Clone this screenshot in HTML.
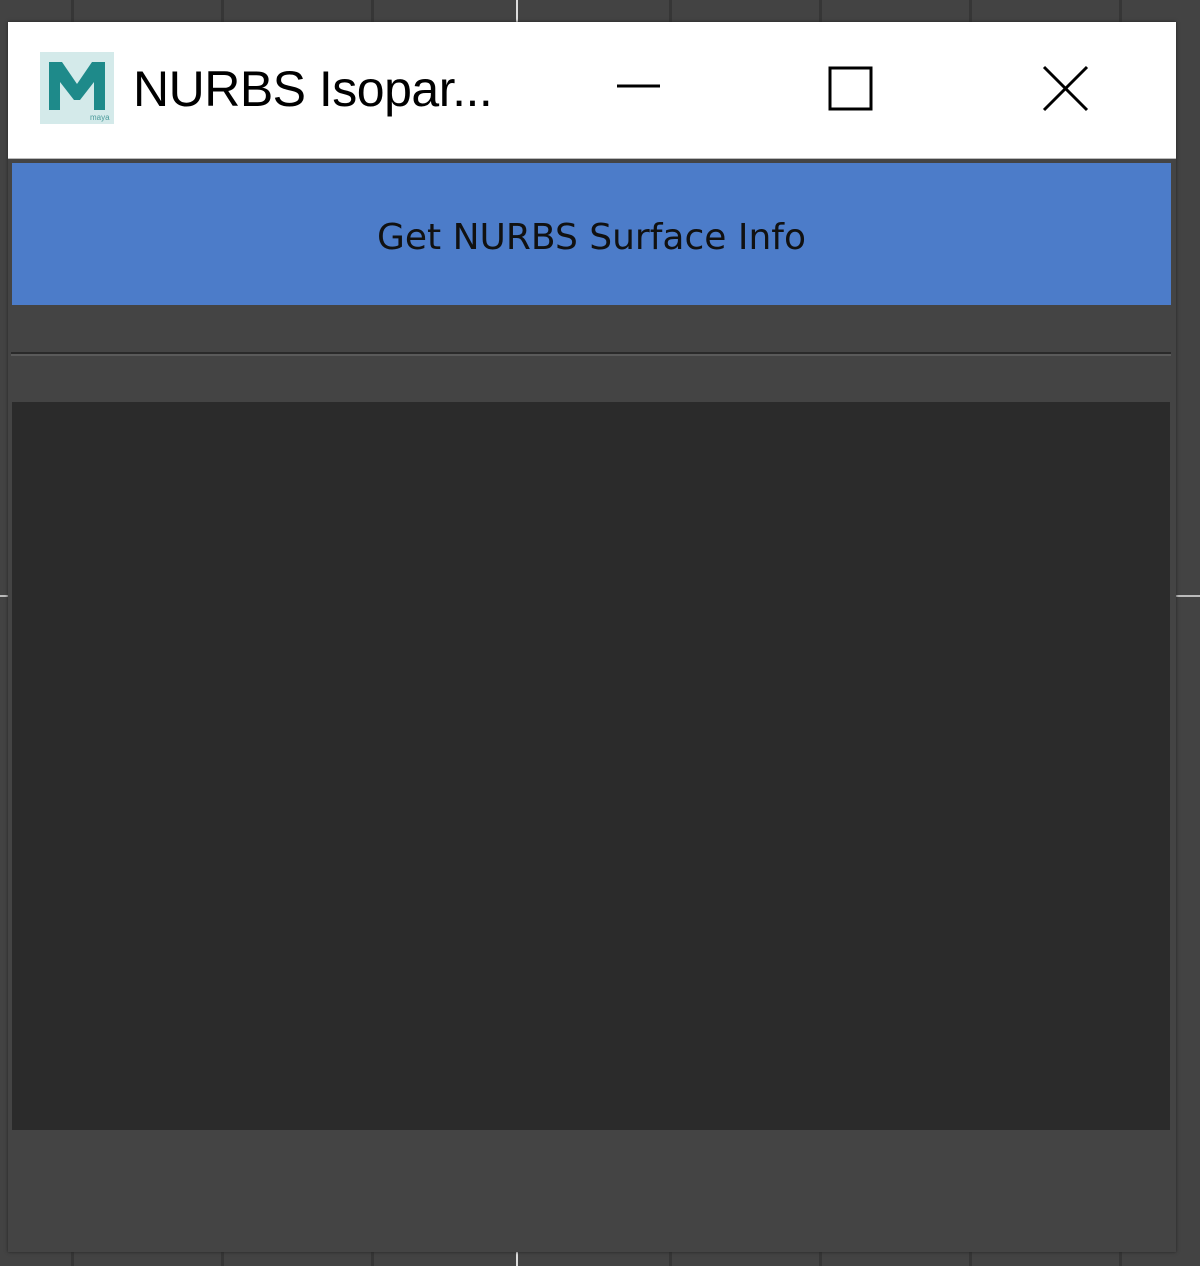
<!DOCTYPE html>
<html><head><meta charset="utf-8"><style>
html,body{margin:0;padding:0;width:1200px;height:1266px;overflow:hidden;background:#434343;position:relative;font-family:"Liberation Sans",sans-serif}
.v{position:absolute;top:0;height:1266px;width:3px;background:#363636}
.h{position:absolute;left:0;width:1200px;height:3px;background:#363636}
.win{position:absolute;left:8px;top:22px;width:1168px;height:1230px;background:#444;box-shadow:0 0 3px #222}
.title{position:absolute;left:0;top:0;width:1168px;height:136px;background:#fff;border-bottom:1px solid #bbb}
.ttl{position:absolute;left:125px;top:38px;font-size:50px;color:#000;letter-spacing:-0.5px}
.btn{position:absolute;left:4px;top:141px;width:1159px;height:142px;background:#4c7cc9;color:#111;font-size:36px;text-align:center;line-height:150px;font-family:"DejaVu Sans","Liberation Sans",sans-serif}
.sep{position:absolute;left:3px;top:330px;width:1160px;height:2px;background:#2a2a2a;border-bottom:2px solid #5a5a5a}
.out{position:absolute;left:4px;top:380px;width:1158px;height:728px;background:#2b2b2b}
</style></head><body>
<div class="v" style="left:71px"></div><div class="v" style="left:221px"></div><div class="v" style="left:371px"></div>
<div class="v" style="left:516px;background:#ddd;width:2px"></div><div class="v" style="left:669px"></div><div class="v" style="left:819px"></div><div class="v" style="left:969px"></div><div class="v" style="left:1119px"></div>
<div class="h" style="top:595px;background:#bbb;height:2px"></div>
<div class="win">
<div class="title">
<svg style="position:absolute;left:32px;top:30px" width="74" height="72" viewBox="0 0 74 72">
<rect width="74" height="72" fill="#d4eaea"/>
<path d="M9 58 V10 H22 L37 32 L52 10 H65 V58 H54 V30 L40 48 H34 L20 30 V58 Z" fill="#1e8a8a"/>
<text x="50" y="68" font-size="8" fill="#4a9a9a" font-family="Liberation Sans">maya</text>
</svg>
<div class="ttl">NURBS Isopar...</div>
<svg style="position:absolute;left:600px;top:40px" width="500" height="80">
<line x1="9" y1="24" x2="52" y2="24" stroke="#000" stroke-width="3"/>
<rect x="222" y="6" width="41" height="41" fill="none" stroke="#000" stroke-width="3"/>
<line x1="436" y1="5" x2="479" y2="48" stroke="#000" stroke-width="3"/>
<line x1="479" y1="5" x2="436" y2="48" stroke="#000" stroke-width="3"/>
</svg>
</div>
<div class="btn">Get NURBS Surface Info</div>
<div class="sep"></div>
<div class="out"></div>
</div>
</body></html>
